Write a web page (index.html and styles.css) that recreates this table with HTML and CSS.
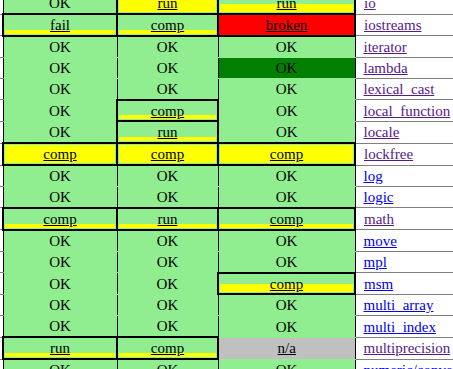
FILE: index.html
```html
<!DOCTYPE html>
<html>
<head>
<meta charset="utf-8">
<link rel="stylesheet" href="styles.css">
</head>
<body>
<table class="summary">
<colgroup><col class="c-pre"><col class="c-1"><col class="c-2"><col class="c-3"><col class="c-lib"></colgroup>
<tr><td class="pre"></td><td class="ok">OK</td><td class="st full"><a href="#">run</a></td><td class="st bar" style="--bar:8px"><a href="#">run</a></td><td class="lib"><a class="vis" href="#">io</a></td></tr>
<tr><td class="pre"></td><td class="st bar" style="--bar:4px"><a href="#">fail</a></td><td class="st bar" style="--bar:4px"><a href="#">comp</a></td><td class="st broken"><a href="#">broken</a></td><td class="lib"><a class="vis" href="#">iostreams</a></td></tr>
<tr><td class="pre"></td><td class="ok">OK</td><td class="ok">OK</td><td class="ok">OK</td><td class="lib"><a class="vis" href="#">iterator</a></td></tr>
<tr><td class="pre"></td><td class="ok">OK</td><td class="ok">OK</td><td class="ok dark">OK</td><td class="lib"><a class="vis" href="#">lambda</a></td></tr>
<tr><td class="pre"></td><td class="ok">OK</td><td class="ok">OK</td><td class="ok">OK</td><td class="lib"><a class="vis" href="#">lexical_cast</a></td></tr>
<tr><td class="pre"></td><td class="ok">OK</td><td class="st bar" style="--bar:4px"><a href="#">comp</a></td><td class="ok">OK</td><td class="lib"><a class="vis" href="#">local_function</a></td></tr>
<tr><td class="pre"></td><td class="ok">OK</td><td class="st bar" style="--bar:4px"><a href="#">run</a></td><td class="ok">OK</td><td class="lib"><a class="vis" href="#">locale</a></td></tr>
<tr><td class="pre"></td><td class="st full"><a href="#">comp</a></td><td class="st full"><a href="#">comp</a></td><td class="st full"><a href="#">comp</a></td><td class="lib"><a class="vis" href="#">lockfree</a></td></tr>
<tr><td class="pre"></td><td class="ok">OK</td><td class="ok">OK</td><td class="ok">OK</td><td class="lib"><a class="new" href="#">log</a></td></tr>
<tr><td class="pre"></td><td class="ok">OK</td><td class="ok">OK</td><td class="ok">OK</td><td class="lib"><a class="new" href="#">logic</a></td></tr>
<tr><td class="pre"></td><td class="st bar" style="--bar:4px"><a href="#">comp</a></td><td class="st bar" style="--bar:4px"><a href="#">run</a></td><td class="st bar" style="--bar:4px"><a href="#">comp</a></td><td class="lib"><a class="vis" href="#">math</a></td></tr>
<tr><td class="pre"></td><td class="ok">OK</td><td class="ok">OK</td><td class="ok">OK</td><td class="lib"><a class="new" href="#">move</a></td></tr>
<tr><td class="pre"></td><td class="ok">OK</td><td class="ok">OK</td><td class="ok">OK</td><td class="lib"><a class="new" href="#">mpl</a></td></tr>
<tr><td class="pre"></td><td class="ok">OK</td><td class="ok">OK</td><td class="st bar" style="--bar:8px"><a href="#">comp</a></td><td class="lib"><a class="new" href="#">msm</a></td></tr>
<tr><td class="pre"></td><td class="ok">OK</td><td class="ok">OK</td><td class="ok">OK</td><td class="lib"><a class="new" href="#">multi_array</a></td></tr>
<tr><td class="pre"></td><td class="ok">OK</td><td class="ok">OK</td><td class="ok">OK</td><td class="lib"><a class="new" href="#">multi_index</a></td></tr>
<tr><td class="pre"></td><td class="st bar" style="--bar:4px"><a href="#">run</a></td><td class="st bar" style="--bar:4px"><a href="#">comp</a></td><td class="ok na"><a href="#">n/a</a></td><td class="lib"><a class="vis" href="#">multiprecision</a></td></tr>
<tr><td class="pre"></td><td class="ok">OK</td><td class="ok">OK</td><td class="ok">OK</td><td class="lib"><a class="new" href="#">numeric/conversion</a></td></tr>
</table>
</body>
</html>
```
FILE: styles.css
```css
html, body {
  margin: 0;
  padding: 0;
  overflow: hidden;
  background: #fff;
}

.summary {
  border-collapse: collapse;
  table-layout: fixed;
  width: 485px;
  margin-top: -8.875px;
  font: 15px "Liberation Serif", "Times New Roman", serif;
  color: #000;
}

.c-pre { width: 3px; }
.c-1 { width: 114px; }
.c-2 { width: 101px; }
.c-3 { width: 137px; }
.c-lib { width: 130px; }

.summary td {
  padding: 1px 0 0;
  line-height: 18.875px;
  height: 18.875px;
  text-align: center;
  white-space: nowrap;
  overflow: hidden;
}

.summary td.pre {
  border-top: 1px solid #808080;
  border-bottom: 1px solid #808080;
  background: #fff;
}

.summary td.ok {
  background: #90ee90;
  border-left: 1px solid #000;
  border-right: 1px solid #000;
  border-top: 1px solid #90ee90;
  border-bottom: 1px solid #90ee90;
}

.summary td.dark { background: #008000; }
.summary td.na { background: #c0c0c0; }

.summary td.st {
  border: 2px solid #000;
  padding: 2px 1px 1px;
  line-height: 16.875px;
  height: 16.875px;
  background: #90ee90;
}

.summary td.bar {
  background: linear-gradient(to top, #ff0 var(--bar), transparent var(--bar)) content-box, #90ee90;
}

.summary td.full {
  background: #ff0;
  box-shadow: inset 0 0 0 1px #90ee90;
}

.summary td.broken { background: #f00; }

.summary td a {
  color: #000;
  text-decoration: underline;
}

.summary td.lib {
  text-align: left;
  padding-left: 8px;
  background: #fff;
  border-top: 1px solid #808080;
  border-bottom: 1px solid #808080;
}

.summary td.lib a.vis { color: #551a8b; }
.summary td.lib a.new { color: #0000ee; }
```
